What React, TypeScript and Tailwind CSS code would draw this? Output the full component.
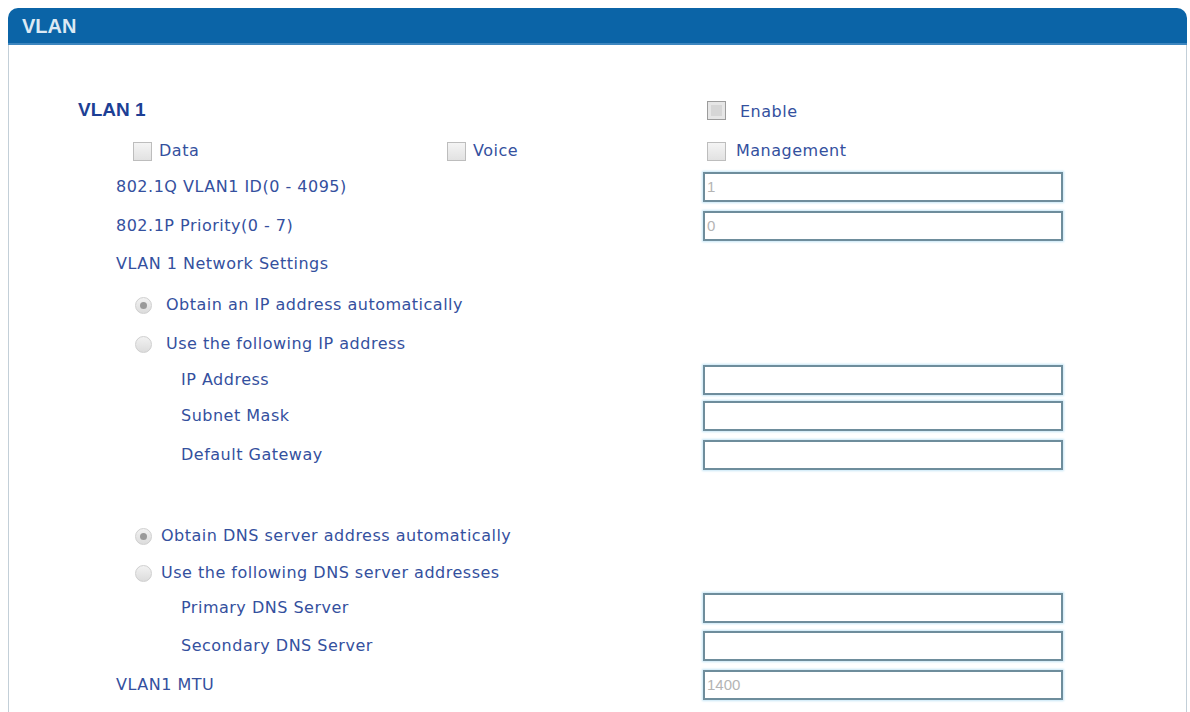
import React from "react";

const font = { fontFamily: '"Liberation Sans", Arial, sans-serif' };

function Box({ dark = false }: { dark?: boolean }) {
  return (
    <span
      className={
        "inline-block w-[19px] h-[19px] border shrink-0 " +
        (dark
          ? "border-[#9c9c9c] bg-[#d6d6d6] shadow-[inset_0_0_0_3px_#e6e6e6]"
          : "border-[#bdbdbd] bg-gradient-to-b from-[#f4f4f4] to-[#e2e2e2]")
      }
    />
  );
}

function Radio({ on = false }: { on?: boolean }) {
  return (
    <span className="inline-flex items-center justify-center w-[17px] h-[17px] rounded-full border border-[#cfcfcf] bg-gradient-to-b from-[#f2f2f2] to-[#dcdcdc] shrink-0">
      {on && <span className="block w-[7px] h-[7px] rounded-full bg-[#9a9a9a]" />}
    </span>
  );
}

function Field({ value = "" }: { value?: string }) {
  return (
    <div className="w-[360px] h-[30px] border-2 border-[#6e8d9c] bg-white shadow-[0_0_2px_1px_#c6e6f6] flex items-center pl-[2px] text-[15px] text-[#b4b4b4]">
      {value}
    </div>
  );
}

const label =
  "font-['DejaVu_Sans',Verdana,sans-serif] text-[16px] tracking-[0.5px] text-[#34509e] whitespace-nowrap";

function Row({
  mt,
  left,
  right,
}: {
  mt: string;
  left?: React.ReactNode;
  right?: React.ReactNode;
}) {
  return (
    <div className={"flex items-center h-[30px] " + mt}>
      <div className="w-[694px] flex items-center">{left}</div>
      <div className="flex items-center">{right}</div>
    </div>
  );
}

export default function App() {
  return (
    <div className="w-[1190px] h-[712px] bg-white overflow-hidden" style={font}>
      <div className="ml-[8px] mr-[3px] mt-[8px]">
        <div className="h-[37px] rounded-t-[10px] bg-[#0b64a7] border-b-2 border-[#3d86bf] flex items-center pl-[14px]">
          <span className="text-[20px] font-bold text-[#dce9f4]">VLAN</span>
        </div>
        <div className="h-[680px] border-x border-[#c3cfd8] flex flex-col pt-[50px]">
          <Row
            mt="mt-0"
            left={
              <span className="pl-[69px] text-[19px] font-bold text-[#1d3f95]">VLAN 1</span>
            }
            right={
              <div className="flex items-center pl-[4px] gap-[14px]">
                <Box dark />
                <span className={label + " translate-y-[2px]"}>Enable</span>
              </div>
            }
          />
          <Row
            mt="mt-[11px]"
            left={
              <div className="flex items-center">
                <div className="w-[438px] pl-[124px] flex items-center gap-[7px]">
                  <Box />
                  <span className={label}>Data</span>
                </div>
                <div className="flex items-center gap-[7px]">
                  <Box />
                  <span className={label}>Voice</span>
                </div>
              </div>
            }
            right={
              <div className="flex items-center pl-[4px] gap-[10px]">
                <Box />
                <span className={label}>Management</span>
              </div>
            }
          />
          <Row
            mt="mt-[6px]"
            left={<span className={label + " pl-[107px]"}>802.1Q VLAN1 ID(0 - 4095)</span>}
            right={<Field value="1" />}
          />
          <Row
            mt="mt-[9px]"
            left={<span className={label + " pl-[107px]"}>802.1P Priority(0 - 7)</span>}
            right={<Field value="0" />}
          />
          <Row
            mt="mt-[8px]"
            left={<span className={label + " pl-[107px]"}>VLAN 1 Network Settings</span>}
          />
          <Row
            mt="mt-[11px]"
            left={
              <div className="pl-[126px] flex items-center gap-[14px]">
                <Radio on />
                <span className={label}>Obtain an IP address automatically</span>
              </div>
            }
          />
          <Row
            mt="mt-[9px]"
            left={
              <div className="pl-[126px] flex items-center gap-[14px]">
                <Radio />
                <span className={label}>Use the following IP address</span>
              </div>
            }
          />
          <Row
            mt="mt-[6px]"
            left={<span className={label + " pl-[172px]"}>IP Address</span>}
            right={<Field />}
          />
          <Row
            mt="mt-[6px]"
            left={<span className={label + " pl-[172px]"}>Subnet Mask</span>}
            right={<Field />}
          />
          <Row
            mt="mt-[9px]"
            left={<span className={label + " pl-[172px]"}>Default Gateway</span>}
            right={<Field />}
          />
          <Row
            mt="mt-[51px]"
            left={
              <div className="pl-[126px] flex items-center gap-[9px]">
                <Radio on />
                <span className={label}>Obtain DNS server address automatically</span>
              </div>
            }
          />
          <Row
            mt="mt-[7px]"
            left={
              <div className="pl-[126px] flex items-center gap-[9px]">
                <Radio />
                <span className={label}>Use the following DNS server addresses</span>
              </div>
            }
          />
          <Row
            mt="mt-[5px]"
            left={<span className={label + " pl-[172px]"}>Primary DNS Server</span>}
            right={<Field />}
          />
          <Row
            mt="mt-[8px]"
            left={<span className={label + " pl-[172px]"}>Secondary DNS Server</span>}
            right={<Field />}
          />
          <Row
            mt="mt-[9px]"
            left={<span className={label + " pl-[107px]"}>VLAN1 MTU</span>}
            right={<Field value="1400" />}
          />
        </div>
      </div>
    </div>
  );
}
